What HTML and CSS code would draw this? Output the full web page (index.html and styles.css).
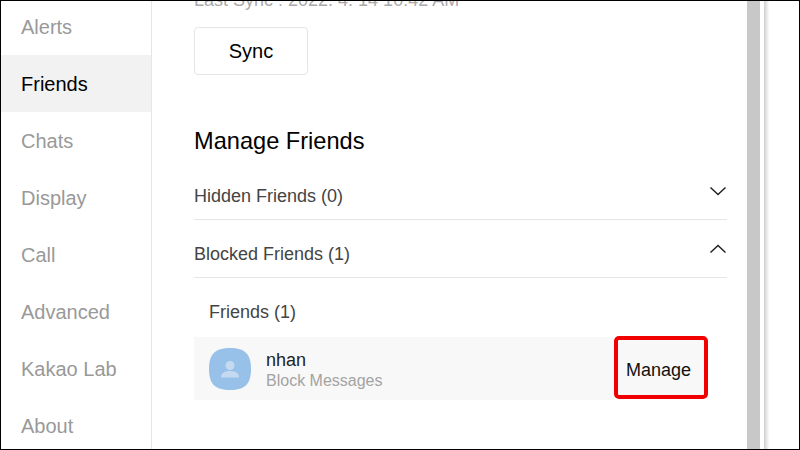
FILE: index.html
```html
<!DOCTYPE html>
<html lang="en">
<head>
<meta charset="utf-8">
<title>Settings</title>
<link rel="stylesheet" href="styles.css">
</head>
<body>
<div class="frame">
  <nav class="side">
    <a class="nav">Alerts</a>
    <a class="nav active">Friends</a>
    <a class="nav">Chats</a>
    <a class="nav">Display</a>
    <a class="nav">Call</a>
    <a class="nav">Advanced</a>
    <a class="nav">Kakao Lab</a>
    <a class="nav">About</a>
  </nav>
  <main class="main">
    <p class="sync-time">Last Sync : 2022. 4. 14 10:42 AM</p>
    <button class="sync">Sync</button>
    <h2 class="title">Manage Friends</h2>
    <div class="row">
      <span>Hidden Friends (0)</span>
      <svg class="chev" width="18" height="10" viewBox="0 0 18 10"><path d="M1.500 1.500 9 8.500l7.500-7" fill="none" stroke="#222" stroke-width="1.500"/></svg>
    </div>
    <div class="row">
      <span>Blocked Friends (1)</span>
      <svg class="chev" width="18" height="10" viewBox="0 0 18 10"><path d="M1.500 8.500 9 1.500l7.500 7" fill="none" stroke="#222" stroke-width="1.500"/></svg>
    </div>
    <div class="sub">Friends (1)</div>
    <div class="friend">
      <svg class="avatar" width="42" height="42" viewBox="0 0 42 42">
        <path d="M21 0C36 0 42 6 42 21S36 42 21 42 0 36 0 21 6 0 21 0Z" fill="#98c1ea"/>
        <circle cx="21" cy="17.500" r="4.500" fill="#c4daf1"/>
        <path d="M12 29.500c0-4.500 4-6.500 9-6.500s9 2 9 6.500Z" fill="#c4daf1"/>
      </svg>
      <div class="info">
        <div class="name">nhan</div>
        <div class="status">Block Messages</div>
      </div>
      <button class="manage">Manage</button>
    </div>
  </main>
  <div class="scroll"></div>
  <div class="edge"></div>
</div>
</body>
</html>
```
FILE: styles.css
```css
* { box-sizing: border-box; }
html, body { margin: 0; padding: 0; }
body { width: 800px; height: 450px; overflow: hidden; background: #fff; font-family: "Liberation Sans", Arial, sans-serif; }
.frame {
  width: 800px; height: 450px; display: flex; overflow: hidden;
  border-style: solid; border-color: #000; border-width: 1px; background: #fff;
}
.side { width: 151px; flex: none; border-right: 1px solid #e6e6e6; margin-top: -3px; }
.nav { display: flex; align-items: center; height: 57px; padding: 2px 0 0 20px; font-size: 20px; color: #999; }
.nav.active { background: #f2f2f2; color: #000; }
.main { width: 595px; flex: none; padding: 0 20px 0 42px; color: #444; overflow: hidden; }
.sync-time { margin: -10px 0 0; height: 18px; line-height: 18px; font-size: 18px; color: #aaa; white-space: nowrap; }
.sync {
  display: block; width: 114px; height: 48px; margin-top: 18px; padding: 0;
  background: #fff; border: 1px solid #e6e6e6; border-radius: 4px;
  font: 20px "Liberation Sans", Arial, sans-serif; color: #000;
}
.title { margin: 52px 0 0; height: 28px; line-height: 28px; font-size: 23.600px; font-weight: 400; color: #000; }
.row {
  display: flex; align-items: center; justify-content: space-between;
  height: 58px; padding-top: 11px; border-bottom: 1px solid #e6e6e6; font-size: 18px; color: #444;
}
.title + .row { margin-top: 7px; }
.chev { margin-top: -11px; }
.sub { padding: 24px 0 0 15px; height: 59px; line-height: 20px; font-size: 18px; color: #444; }
.friend { display: flex; align-items: center; height: 63px; padding-left: 15px; background: #f8f8f8; width: 420px; position: relative; }
.avatar { flex: none; }
.info { margin: 4px 0 0 15px; }
.name { font-size: 18px; line-height: 21px; color: #222; }
.status { font-size: 16px; line-height: 20px; color: #a3a3a3; }
.manage {
  position: absolute; left: 420px; top: -1px; width: 94px; height: 63px; padding: 6px 5px 0 0;
  background: #f8f8f8; border: 4px solid #f00000; border-radius: 5px;
  font: 18px "Liberation Sans", Arial, sans-serif; color: #111;
}
.scroll { width: 13px; flex: none; background: #c8c8c8; margin-top: -1px; }
.edge { width: 5px; margin-left: 4px; flex: none; margin-top: -1px; background: linear-gradient(to right, #cfcfcf, #fbfbfb); }
```
